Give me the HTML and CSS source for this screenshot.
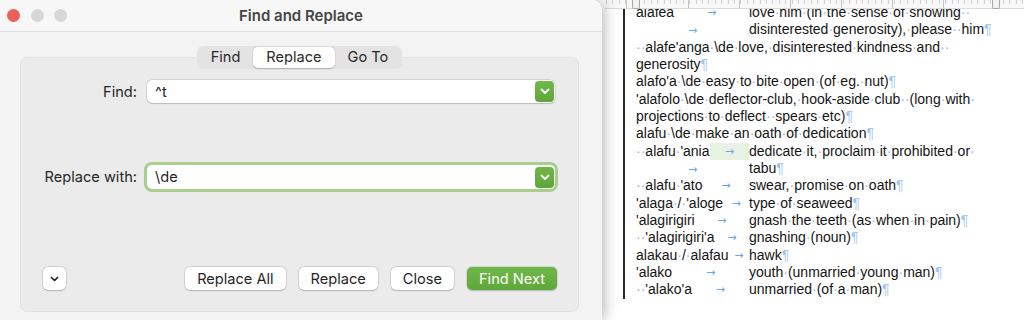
FILE: index.html
```html
<!DOCTYPE html>
<html lang="en">
<head>
  <meta charset="UTF-8" />
  <title>Find and Replace</title>
  <link rel="stylesheet" href="styles.css">
</head>
<body>
  <div class="window">
    <div class="titlebar">
      <div class="lights">
        <span class="light red"></span><span class="light"></span><span class="light"></span>
      </div>
      <div class="title">Find and Replace</div>
    </div>

    <div class="content">
      <div class="tabs">
        <span class="tab">Find</span><span class="tab active">Replace</span><span class="tab">Go To</span>
      </div>

      <div class="panel">
        <div class="row">
          <label for="find">Find:</label>
          <div class="input">
            <span id="find">^t</span>
            <span class="drop"><svg width="10" height="7" viewBox="0 0 10 7"><polyline points="1.5,1.5 5,5 8.5,1.5" fill="none" stroke="#fff" stroke-width="1.8" stroke-linecap="round" stroke-linejoin="round"/></svg></span>
          </div>
        </div>

        <div class="row replace-row">
          <label for="replace">Replace with:</label>
          <div class="input focused">
            <span id="replace">\de</span>
            <span class="drop"><svg width="10" height="7" viewBox="0 0 10 7"><polyline points="1.5,1.5 5,5 8.5,1.5" fill="none" stroke="#fff" stroke-width="1.8" stroke-linecap="round" stroke-linejoin="round"/></svg></span>
          </div>
        </div>

        <div class="actions">
          <button class="disclose"><svg width="9" height="6" viewBox="0 0 9 6"><polyline points="1.5,1.5 4.5,4.5 7.5,1.5" fill="none" stroke="#222" stroke-width="1.7" stroke-linecap="round" stroke-linejoin="round"/></svg></button>
          <div class="spacer"></div>
          <button>Replace All</button>
          <button>Replace</button>
          <button>Close</button>
          <button class="primary">Find Next</button>
        </div>
      </div>
    </div>
  </div>

  <div class="doc">
    <div class="ruler"><span class="marker first"></span><span class="marker last"></span></div>
    <div class="page">
      <div class="ln"><span class="hw">alafea<em>→</em></span>love<i>·</i>him<i>·</i>(in<i>·</i>the<i>·</i>sense<i>·</i>of<i>·</i>showing<i>·</i><i>·</i></div>
      <div class="ln"><span class="hw"><em>→</em></span>disinterested<i>·</i>generosity),<i>·</i>please<i>·</i><i>·</i>him<b>¶</b></div>
      <div class="ln"><i>·</i><i>·</i>alafe'anga<i>·</i>\de<i>·</i>love,<i>·</i>disinterested<i>·</i>kindness<i>·</i>and<i>·</i><i>·</i></div>
      <div class="ln">generosity<b>¶</b></div>
      <div class="ln">alafo'a<i>·</i>\de<i>·</i>easy<i>·</i>to<i>·</i>bite<i>·</i>open<i>·</i>(of<i>·</i>eg.<i>·</i>nut)<b>¶</b></div>
      <div class="ln">'alafolo<i>·</i>\de<i>·</i>deflector-club,<i>·</i>hook-aside<i>·</i>club<i>·</i><i>·</i>(long<i>·</i>with<i>·</i></div>
      <div class="ln">projections<i>·</i>to<i>·</i>deflect<i>·</i><i>·</i>spears<i>·</i>etc)<b>¶</b></div>
      <div class="ln">alafu<i>·</i>\de<i>·</i>make<i>·</i>an<i>·</i>oath<i>·</i>of<i>·</i>dedication<b>¶</b></div>
      <div class="ln"><span class="hw"><i>·</i><i>·</i>alafu<i>·</i>'ania<em class="hit">→</em></span>dedicate<i>·</i>it,<i>·</i>proclaim<i>·</i>it<i>·</i>prohibited<i>·</i>or<i>·</i></div>
      <div class="ln"><span class="hw"><em>→</em></span>tabu<b>¶</b></div>
      <div class="ln"><span class="hw"><i>·</i><i>·</i>alafu<i>·</i>'ato<em>→</em></span>swear,<i>·</i>promise<i>·</i>on<i>·</i>oath<b>¶</b></div>
      <div class="ln"><span class="hw">'alaga<i>·</i>/<i>·</i>'aloge<em>→</em></span>type<i>·</i>of<i>·</i>seaweed<b>¶</b></div>
      <div class="ln"><span class="hw">'alagirigiri<em>→</em></span>gnash<i>·</i>the<i>·</i>teeth<i>·</i>(as<i>·</i>when<i>·</i>in<i>·</i>pain)<b>¶</b></div>
      <div class="ln"><span class="hw"><i>·</i><i>·</i>'alagirigiri'a<em>→</em></span>gnashing<i>·</i>(noun)<b>¶</b></div>
      <div class="ln"><span class="hw">alakau<i>·</i>/<i>·</i>alafau<em>→</em></span>hawk<b>¶</b></div>
      <div class="ln"><span class="hw">'alako<em>→</em></span>youth<i>·</i>(unmarried<i>·</i>young<i>·</i>man)<b>¶</b></div>
      <div class="ln"><span class="hw"><i>·</i><i>·</i>'alako'a<em>→</em></span>unmarried<i>·</i>(of<i>·</i>a<i>·</i>man)<b>¶</b></div>
    </div>
  </div>
</body>
</html>
```

FILE: styles.css
```css
* { box-sizing: border-box; }
body {
  margin: 0; height: 320px; overflow: hidden; display: flex;
  background: #fff; font-family: Inter, "Liberation Sans", sans-serif;
}

/* dialog window */
.window {
  width: 602px; flex: none; position: relative; z-index: 2;
  background: #f3f3f3; border-top-right-radius: 10px;
  box-shadow: 2px 0 14px rgba(0, 0, 0, 0.3);
}
.titlebar {
  height: 32px; display: grid; grid-template-columns: 1fr auto 1fr; align-items: center;
  background: #f7f7f7; border-bottom: 1px solid #dedede; border-top-right-radius: 10px;
}
.lights { display: flex; gap: 10.5px; padding-left: 7px; }
.light { width: 13px; height: 13px; border-radius: 50%; background: #d7d7d7; }
.light.red { background: #ed5f57; }
.title { font-size: 15px; font-weight: 600; color: #454545; }

.content { display: flex; flex-direction: column; padding: 14px 23px 0 20px; }

.tabs {
  align-self: center; display: flex; padding: 1px; margin-bottom: -12px;
  position: relative; z-index: 1;
  background: #e3e3e3; border-radius: 6px;
}
.tab { padding: 0 13px; line-height: 21px; font-size: 14.6px; color: #2a2a2a; border-radius: 5px; }
.tab.active { background: #fff; box-shadow: 0 0.5px 1.5px rgba(0, 0, 0, 0.25); }

.panel {
  height: 255px; padding: 22px 23px 21px 22px;
  background: #ebebeb; border: 1px solid #e2e2e2; border-radius: 7px;
}
.row { display: flex; align-items: center; gap: 10px; }
.row label { width: 94px; text-align: right; font-size: 14.6px; color: #262626; white-space: nowrap; }
.input {
  flex: 1; height: 23px; display: flex; align-items: center; padding: 1px 1px 1px 8px;
  background: #fff; border-radius: 5px; font-size: 14.6px; color: #1e1e1e;
  box-shadow: 0 0 0 0.5px rgba(0, 0, 0, 0.18), 0 0.5px 1px rgba(0, 0, 0, 0.12);
}
.input.focused { height: 24px; box-shadow: 0 0 0 3px #a8cf8e; }
.drop {
  margin-left: auto; width: 19px; height: 21px; border-radius: 4px;
  display: flex; align-items: center; justify-content: center;
  background: linear-gradient(#6fb848, #5ea63a);
}
.replace-row { margin-top: 62px; }

.actions { display: flex; align-items: center; gap: 13px; margin: 78px -2px 0 0; }
.spacer { flex: 1; }
.actions button {
  height: 23px; padding: 0 12px; border: none; border-radius: 5px;
  background: #fff; font: 14.6px Inter, "Liberation Sans", sans-serif; color: #262626;
  box-shadow: 0 0 0 0.5px rgba(0, 0, 0, 0.16), 0 0.5px 1.5px rgba(0, 0, 0, 0.16);
}
.actions .disclose { width: 23px; padding: 0; display: flex; align-items: center; justify-content: center; }
.actions .primary { background: linear-gradient(#6fb848, #5fa73b); color: #fff; }

/* word document behind */
.doc { flex: 1; position: relative; }
.ruler {
  position: absolute; top: 0; left: 3px; right: 0; height: 9px; z-index: 1;
  display: flex; align-items: flex-start;
  background-color: #f8f8f8;
  background-image:
    repeating-linear-gradient(90deg, #c4c4c4 0 1px, transparent 1px 51px),
    repeating-linear-gradient(90deg, #d2d2d2 0 1px, transparent 1px 6.4px);
  background-size: 100% 8px, 100% 4px;
  background-position: 32px 0, 1px 0;
  background-repeat: repeat-x;
  border-bottom: 1px solid #dadada;
}
.marker { width: 8px; height: 9px; background: #f2f2f2; border: 1px solid #a9a9a9; border-top: none; border-radius: 0 0 2px 2px; }
.marker.first { margin-left: 27px; }
.marker.last { margin-left: auto; margin-right: 24px; }

.page {
  margin: 4px 0 0 21px; padding-left: 11px; border-left: 2px solid #2a2a2a;
  font: 14px/17.34px "Liberation Sans", Arial, sans-serif; color: #141414;
}
.ln { white-space: nowrap; height: 17.34px; }
.hw { display: inline-flex; width: 113px; }
.page i { font-style: normal; color: #8db6e8; }
.page b { font-weight: normal; color: #a3c6ee; }
.page em {
  flex: 1; text-align: center; font: 11px/17.34px "DejaVu Sans", sans-serif; color: #6aa6ec;
}
.page em.hit { background: #e8f2e2; }
```
